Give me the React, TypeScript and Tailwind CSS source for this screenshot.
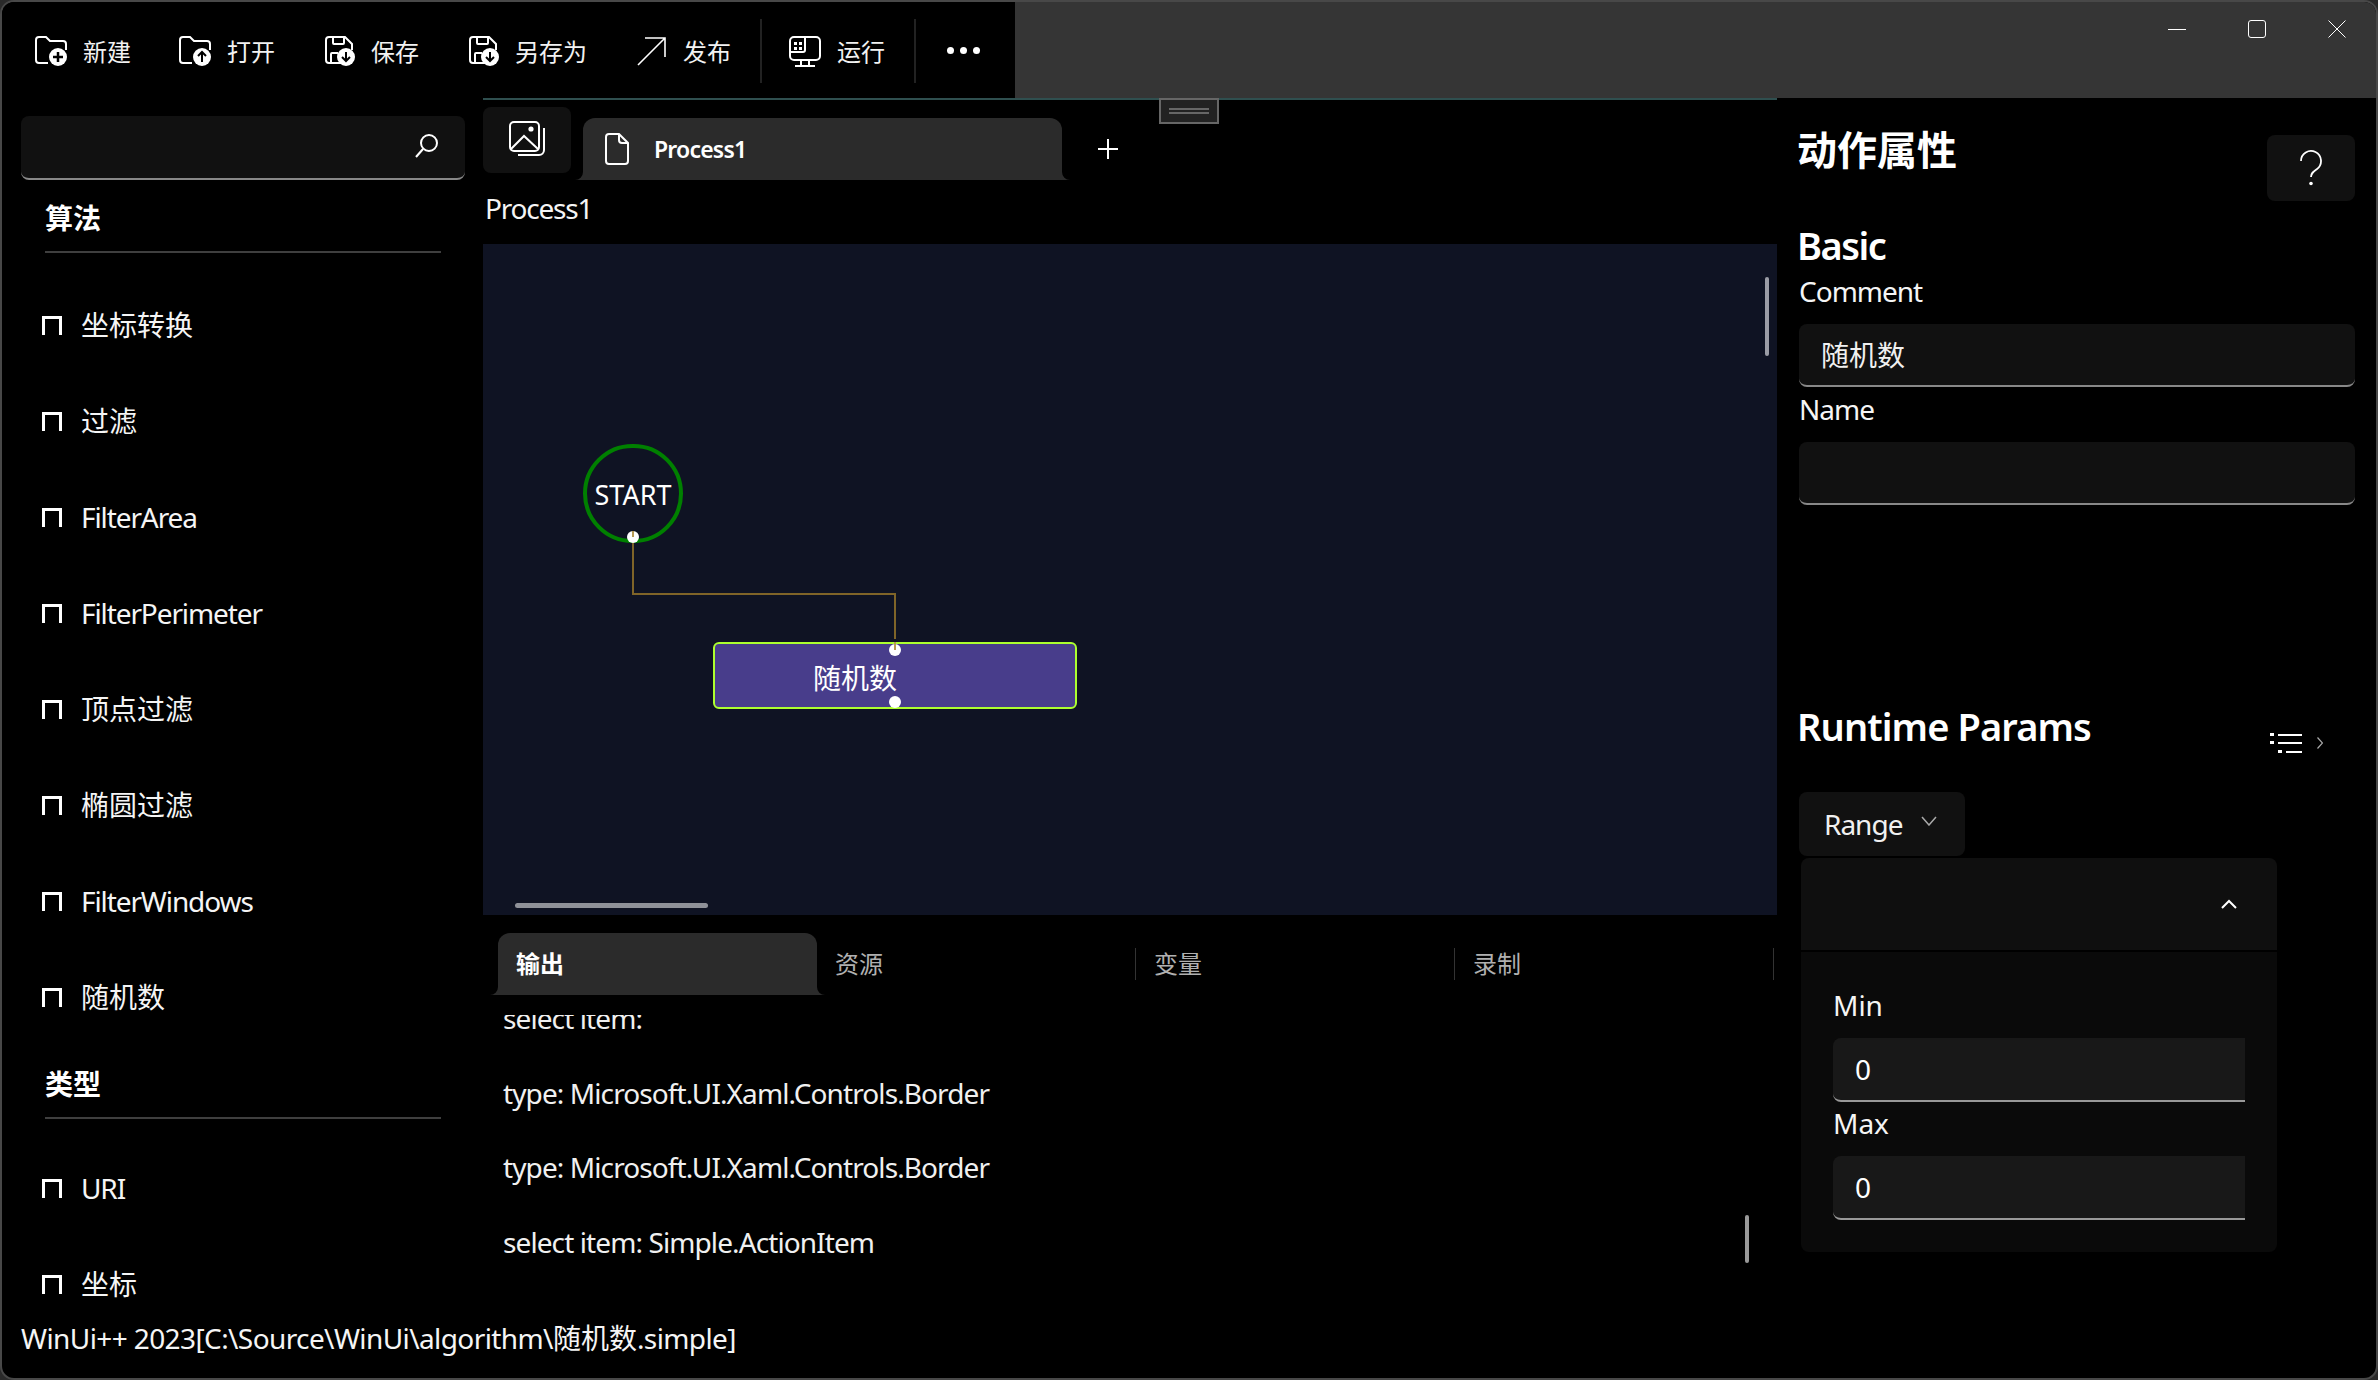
import type { ReactNode } from "react";

const algorithmItems = ["坐标转换", "过滤", "FilterArea", "FilterPerimeter", "顶点过滤", "椭圆过滤", "FilterWindows", "随机数"];
const outputLines = [
  "select item:",
  "type: Microsoft.UI.Xaml.Controls.Border",
  "type: Microsoft.UI.Xaml.Controls.Border",
  "select item: Simple.ActionItem",
];

function FolderIcon({ up }: { up?: boolean }) {
  return (
    <svg width="32" height="31" viewBox="0 0 32 31" fill="none" stroke="white" strokeWidth="2">
      <path d="M1 4a3 3 0 0 1 3-3h7l4 4h13a3 3 0 0 1 3 3v6M1 4v20a3 3 0 0 0 3 3h9" />
      <circle cx="23" cy="21" r="9" fill="white" stroke="none" />
      {up ? (
        <path d="M23 26v-10M19 20l4-4 4 4" stroke="black" strokeWidth="2" />
      ) : (
        <path d="M23 16v10M18 21h10" stroke="black" strokeWidth="2.5" />
      )}
    </svg>
  );
}

function SaveIcon() {
  return (
    <svg width="30" height="31" viewBox="0 0 30 31" fill="none" stroke="white" strokeWidth="2">
      <path d="M15 27H4a3 3 0 0 1-3-3V4a3 3 0 0 1 3-3h16l7 7v6" />
      <path d="M8 1v6a1 1 0 0 0 1 1h9a1 1 0 0 0 1-1V1M6 27v-9a1 1 0 0 1 1-1h6" />
      <circle cx="21" cy="21" r="9" fill="white" stroke="none" />
      <path d="M21 16v9M17 21l4 4 4-4" stroke="black" strokeWidth="2" />
    </svg>
  );
}

function PublishIcon() {
  return (
    <svg width="29" height="29" viewBox="0 0 29 29" fill="none" stroke="white" strokeWidth="1.6">
      <path d="M1 28 28 1M8 1h20v19" />
    </svg>
  );
}

function RunIcon() {
  return (
    <svg width="32" height="31" viewBox="0 0 32 31" fill="none" stroke="white" strokeWidth="2">
      <rect x="1" y="1" width="30" height="23" rx="4" />
      <path d="M16 1v13a2 2 0 0 1-2 2H1M12 24v6M20 24v6M6 30h20" />
      <g fill="white" stroke="none">
        <rect x="5" y="6" width="3" height="3" />
        <rect x="10" y="6" width="3" height="3" />
        <rect x="5" y="11" width="3" height="3" />
        <rect x="10" y="11" width="3" height="3" />
      </g>
    </svg>
  );
}

function ToolButton({ icon, label, gap = "gap-4" }: { icon: ReactNode; label: string; gap?: string }) {
  return (
    <div className={`flex items-center ${gap} h-[32px]`}>
      {icon}
      <span className="pt-[2px] text-[24px] leading-[32px] text-[#f2f2f2]">{label}</span>
    </div>
  );
}

function CommandBar() {
  return (
    <div className="w-[1013px] h-full bg-black flex items-center pl-[33px] pt-[2px]">
      <ToolButton icon={<FolderIcon />} label="新建" />
      <div className="ml-[48px]">
        <ToolButton icon={<FolderIcon up />} label="打开" />
      </div>
      <div className="ml-[50px]">
        <ToolButton icon={<SaveIcon />} label="保存" />
      </div>
      <div className="ml-[50px]">
        <ToolButton icon={<SaveIcon />} label="另存为" />
      </div>
      <div className="ml-[50px]">
        <ToolButton icon={<PublishIcon />} label="发布" gap="gap-[17px]" />
      </div>
      <div className="ml-[29px] w-[2px] h-[64px] bg-[#222]" />
      <div className="ml-[27px]">
        <ToolButton icon={<RunIcon />} label="运行" />
      </div>
      <div className="ml-[29px] w-[2px] h-[64px] bg-[#222]" />
      <div className="ml-[31px] mb-[2px] flex gap-[6px]">
        <span className="w-[7px] h-[7px] rounded-full bg-white" />
        <span className="w-[7px] h-[7px] rounded-full bg-white" />
        <span className="w-[7px] h-[7px] rounded-full bg-white" />
      </div>
    </div>
  );
}

function WindowControls() {
  return (
    <div className="flex-1 h-full bg-[#353535] flex justify-end pr-[30px] pt-[18px] gap-[62px]">
      <svg width="18" height="18" viewBox="0 0 18 18" stroke="white" strokeWidth="1">
        <path d="M0 9.5h18" />
      </svg>
      <svg width="18" height="18" viewBox="0 0 18 18" fill="none" stroke="white" strokeWidth="1">
        <rect x="0.5" y="0.5" width="17" height="17" rx="2.5" />
      </svg>
      <svg width="18" height="18" viewBox="0 0 18 18" fill="none" stroke="white" strokeWidth="1">
        <path d="M0.5 0.5l17 17M17.5 0.5l-17 17" />
      </svg>
    </div>
  );
}

function PaneItem({ label, className = "h-[96px]" }: { label: string; className?: string }) {
  // Noto runs wider than the original UI font, so latin labels get pulled in
  const isLatin = /^[\x00-\x7f]+$/.test(label);
  return (
    <div className={`flex items-center pl-[40px] gap-[19px] ${className}`}>
      <div className="w-[20px] h-[19px] border-[3px] border-b-0 border-white" />
      <span className={`text-[28px] leading-[36px] text-[#f5f5f5] ${isLatin ? "tracking-[-1.1px]" : ""}`}>{label}</span>
    </div>
  );
}

function PaneHeader({ label }: { label: string }) {
  return (
    <div className="ml-[43px] w-[396px] border-b-2 border-[#3f3f3f] pb-[15px]">
      <div className="text-[28px] leading-[36px] font-bold text-white">{label}</div>
    </div>
  );
}

function LeftPane() {
  return (
    <div className="w-[481px] h-full overflow-hidden">
      <div className="ml-[19px] mt-[18px] w-[444px] h-[64px] bg-[#111] rounded-lg border-b-2 border-[#888] flex items-center justify-end pr-[25px]">
        <svg width="26" height="26" viewBox="0 0 26 26" fill="none" stroke="white" strokeWidth="2" className="mb-[2px]">
          <circle cx="15" cy="10" r="8" />
          <path d="M9 16 2 24" />
        </svg>
      </div>
      <div className="mt-[20px]">
        <PaneHeader label="算法" />
      </div>
      <div className="mt-[24px]">
        {algorithmItems.map((item) => (
          <PaneItem key={item} label={item} />
        ))}
      </div>
      <div className="mt-[21px]">
        <PaneHeader label="类型" />
      </div>
      <div className="mt-[21px]">
        <PaneItem label="URI" />
        <PaneItem label="坐标" className="h-[67px] pt-[29px]" />
      </div>
    </div>
  );
}

// little flared foot of a tab, sits at its bottom corner
function TabFoot({ side }: { side: "left" | "right" }) {
  return (
    <svg
      width="8"
      height="8"
      viewBox="0 0 8 8"
      className={side === "left" ? "absolute bottom-0 -left-[8px]" : "absolute bottom-0 -right-[8px] -scale-x-100"}
    >
      <path d="M8 0v8H0a8 8 0 0 0 8-8z" fill="#2b2b2b" />
    </svg>
  );
}

function DocumentTabs() {
  return (
    <div className="relative h-[82px] flex items-start border-t-2 border-[#2f4f4f]">
      <div className="mt-[7px] w-[88px] h-[66px] bg-[#111] rounded-lg flex items-center justify-center pb-[2px]">
        <svg width="37" height="36" viewBox="0 0 37 36" fill="none" stroke="white" strokeWidth="2">
          <rect x="1" y="1" width="29" height="29" rx="4" />
          <circle cx="22" cy="8" r="2.6" fill="white" stroke="none" />
          <path d="M2 28 15 15 29 28M35 7v22a5 5 0 0 1-5 5H9" />
        </svg>
      </div>
      <div className="relative ml-[12px] mt-[18px] w-[479px] h-[62px] bg-[#2b2b2b] rounded-t-xl flex items-center pl-[22px] gap-[25px]">
        <svg width="24" height="32" viewBox="0 0 24 32" fill="none" stroke="white" strokeWidth="2">
          <path d="M4 1h10l9 9v18a3 3 0 0 1-3 3H4a3 3 0 0 1-3-3V4a3 3 0 0 1 3-3zM14 1v6a3 3 0 0 0 3 3h6" />
        </svg>
        <span className="text-[23px] leading-[32px] font-semibold tracking-[-0.8px] text-white">Process1</span>
        <TabFoot side="left" />
        <TabFoot side="right" />
      </div>
      <svg width="20" height="20" viewBox="0 0 20 20" stroke="white" strokeWidth="2" className="ml-[36px] mt-[39px]">
        <path d="M10 0v20M0 10h20" />
      </svg>
      {/* splitter grip */}
      <div className="absolute -top-[2px] left-[676px] w-[60px] h-[26px] border-2 border-[#666] bg-[#222] flex flex-col items-center justify-center gap-[2px]">
        <div className="w-[40px] h-[2px] bg-[#666]" />
        <div className="w-[40px] h-[2px] bg-[#666]" />
      </div>
    </div>
  );
}

function Port({ className }: { className: string }) {
  return <div className={`absolute w-[12px] h-[12px] rounded-full bg-white ${className}`} />;
}

function FlowCanvas() {
  return (
    <div className="relative h-[671px] bg-[#0f1323] overflow-hidden">
      <svg className="absolute left-0 top-0" width="1294" height="671" fill="none">
        <path d="M150 293V350H412V395" stroke="#7f6428" strokeWidth="2" />
      </svg>
      <div className="absolute left-[100px] top-[200px] w-[100px] h-[99px] rounded-full border-4 border-[#008000] flex items-center justify-center">
        <span className="pt-[3px] text-[27px] leading-[36px] text-white">START</span>
      </div>
      <Port className="left-[144px] top-[287px]" />
      <div className="absolute left-[230px] top-[398px] w-[364px] h-[67px] rounded-md border-2 border-[#adff2f] bg-[#483d8b] flex items-center pl-[98px] pt-[4px]">
        <span className="text-[28px] leading-[36px] text-white">随机数</span>
      </div>
      <Port className="left-[406px] top-[400px]" />
      <Port className="left-[406px] top-[452px]" />
      <svg className="absolute left-0 top-0" width="1294" height="671" fill="none">
        <path d="M412 398V406" stroke="#b79a55" strokeWidth="2" />
        <path d="M150 287V293" stroke="#b79a55" strokeWidth="2" />
      </svg>
      {/* scroll thumbs */}
      <div className="absolute left-[1282px] top-[33px] w-[4px] h-[79px] rounded-full bg-[#9a9ca5]" />
      <div className="absolute left-[32px] top-[659px] w-[193px] h-[5px] rounded-full bg-[#8f9198]" />
    </div>
  );
}

function OutputTabs() {
  const others = ["资源", "变量", "录制"];
  return (
    <div className="h-[80px] pt-[18px] pl-[15px] flex">
      <div className="relative w-[319px] h-[62px] bg-[#2b2b2b] rounded-t-xl flex items-center pl-[18px]">
        <span className="text-[24px] leading-[32px] font-bold text-white">输出</span>
        <TabFoot side="left" />
        <TabFoot side="right" />
      </div>
      {others.map((tab) => (
        <div key={tab} className="w-[319px] h-[62px] flex items-center">
          <div className="w-full h-[32px] flex items-center pl-[18px] border-r border-[#333]">
            <span className="text-[24px] leading-[32px] text-[#b0b0b0]">{tab}</span>
          </div>
        </div>
      ))}
    </div>
  );
}

function OutputLog() {
  return (
    <div className="relative mt-[20px] h-[283px] overflow-hidden">
      <div className="-mt-[34px] pl-[20px]">
        {outputLines.map((line, i) => (
          <div key={i} className="h-[74.5px] flex items-center text-[28px] tracking-[-0.9px] text-[#f0f0f0]">
            {line}
          </div>
        ))}
      </div>
      <div className="absolute left-[1262px] top-[200px] w-[4px] h-[48px] rounded-full bg-[#999]" />
    </div>
  );
}

function CenterPane() {
  return (
    <div className="w-[1294px] h-full">
      <DocumentTabs />
      <div className="h-[64px] pl-[2px] pb-[8px] flex items-center">
        <span className="text-[28px] leading-[36px] tracking-[-1.2px] text-[#f5f5f5]">Process1</span>
      </div>
      <FlowCanvas />
      <OutputTabs />
      <OutputLog />
    </div>
  );
}

function Field({ value, className }: { value?: string; className: string }) {
  return (
    <div className={`bg-[#111] rounded-lg border-b-2 border-[#888] flex items-center pl-[22px] text-[28px] leading-[36px] text-[#f0f0f0] ${className}`}>
      {value}
    </div>
  );
}

function NumberField({ className }: { className?: string }) {
  return (
    <div className={`w-[412px] h-[64px] bg-[#181818] rounded-l-lg border-b-2 border-[#999] flex items-center pl-[22px] text-[28px] text-white ${className ?? ""}`}>
      0
    </div>
  );
}

function RightPane() {
  return (
    <div className="flex-1 h-full pl-[22px] pr-[21px]">
      <div className="flex justify-between items-start">
        <div className="mt-[26px] -ml-[2px] text-[40px] leading-[52px] font-bold text-white">动作属性</div>
        <div className="mt-[37px] w-[88px] h-[66px] bg-[#111] rounded-lg flex items-center justify-center">
          <svg width="24" height="36" viewBox="0 0 24 36" fill="none" stroke="white" strokeWidth="1.8">
            <path d="M2 11a10 10 0 1 1 16 8c-3.500 2.500-6 4-6 8" />
            <circle cx="12" cy="33.500" r="1.800" fill="white" stroke="none" />
          </svg>
        </div>
      </div>
      <div className="mt-[20px] -ml-[2px] text-[38px] leading-[48px] font-semibold tracking-[-1.5px] text-white">Basic</div>
      <div className="mt-[4px] text-[28px] leading-[36px] tracking-[-1px] text-[#f5f5f5]">Comment</div>
      <Field value="随机数" className="mt-[15px] h-[63px]" />
      <div className="mt-[4px] text-[28px] leading-[36px] tracking-[-1px] text-[#f5f5f5]">Name</div>
      <Field className="mt-[15px] h-[63px]" />
      <div className="mt-[195px] h-[52px] flex items-center">
        <div className="flex-1 -ml-[2px] text-[38px] leading-[52px] font-semibold tracking-[-0.9px] text-white">Runtime Params</div>
        <div className="mt-[34px] mr-[32px] flex items-center gap-[15px]">
          <svg width="32" height="20" viewBox="0 0 32 20" fill="white">
            <rect x="0" y="0" width="4" height="3" />
            <rect x="8" y="1" width="24" height="2" />
            <rect x="0" y="8" width="4" height="3" />
            <rect x="8" y="9" width="24" height="2" />
            <rect x="8" y="17" width="4" height="3" />
            <rect x="16" y="18" width="16" height="2" />
          </svg>
          <svg width="6" height="12" viewBox="0 0 6 12" fill="none" stroke="#aaa" strokeWidth="1.2">
            <path d="M0.500 0.500 5.500 6 0.500 11.500" />
          </svg>
        </div>
      </div>
      <div className="mt-[40px] w-[166px] h-[64px] bg-[#111] rounded-lg flex items-center pl-[25px] gap-[19px]">
        <span className="text-[28px] leading-[36px] tracking-[-1px] text-[#f0f0f0]">Range</span>
        <svg width="16" height="10" viewBox="0 0 16 10" fill="none" stroke="#aaa" strokeWidth="1.500" className="mb-[6px]">
          <path d="M1 1l7 8 7-8" />
        </svg>
      </div>
      <div className="mt-[2px] ml-[2px] w-[476px]">
        <div className="h-[92px] bg-[#0f0f0f] rounded-t-lg flex items-center justify-end pr-[40px]">
          <svg width="16" height="10" viewBox="0 0 16 10" fill="none" stroke="white" strokeWidth="2">
            <path d="M1 9l7-7 7 7" />
          </svg>
        </div>
        <div className="mt-[2px] h-[300px] bg-[#0a0a0a] rounded-b-lg pl-[32px] pt-[35px]">
          <div className="text-[28px] leading-[36px] text-[#f5f5f5]">Min</div>
          <NumberField className="mt-[15px]" />
          <div className="mt-[3px] text-[28px] leading-[36px] text-[#f5f5f5]">Max</div>
          <NumberField className="mt-[15px]" />
        </div>
      </div>
    </div>
  );
}

export default function App() {
  return (
    <div className="w-[2378px] h-[1380px] bg-[#2a2a2a] font-['Noto_Sans','Noto_Sans_CJK_SC',sans-serif]">
      <div className="w-full h-full rounded-[14px] border-2 border-[#484848] bg-black overflow-hidden flex flex-col">
        <div className="h-[96px] flex">
          <CommandBar />
          <WindowControls />
        </div>
        <div className="h-[1206px] flex">
          <LeftPane />
          <CenterPane />
          <RightPane />
        </div>
        <div className="flex-1 pl-[19px] pb-[6px] flex items-center text-[28px] leading-[36px] tracking-[-0.6px] text-[#f5f5f5]">
          WinUi++ 2023[C:\Source\WinUi\algorithm\<span className="tracking-normal">随机数</span>.simple]
        </div>
      </div>
    </div>
  );
}
